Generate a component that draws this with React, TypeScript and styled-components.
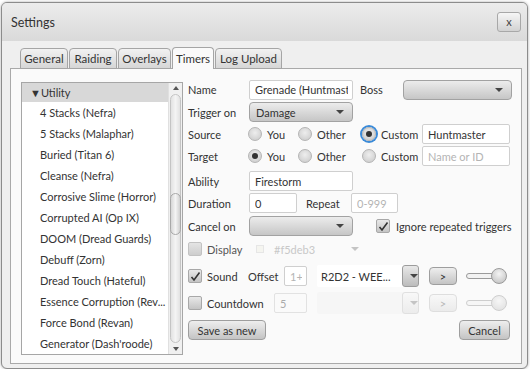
import styled, { createGlobalStyle } from 'styled-components';

const GlobalStyle = createGlobalStyle`
  body {
    margin: 0;
    background: #ffffff;
    font-family: Lato, 'Open Sans', sans-serif;
    font-size: 11px;
    color: #333;
  }
  * { box-sizing: border-box; }
`;

const Window = styled.div`
  width: 527px;
  height: 367px;
  margin: 2px 0 0 1px;
  border: 1px solid #8c8c8c;
  border-radius: 6px;
  box-shadow: 0 0 3px rgba(0, 0, 0, 0.35);
  overflow: hidden;
  display: flex;
  flex-direction: column;
  background: #efefef;
`;

const TitleBar = styled.div`
  height: 38px;
  flex: none;
  display: flex;
  align-items: center;
  justify-content: space-between;
  padding: 0 6px 0 9px;
  background: linear-gradient(#ececec, #d9d9d9);
  font-size: 12.5px;
  color: #333;
`;

const CloseButton = styled.div`
  width: 24px;
  height: 20px;
  border: 1px solid #a8a8a8;
  border-radius: 3px;
  background: linear-gradient(#f6f6f6, #d2d2d2);
  display: flex;
  align-items: center;
  justify-content: center;
  font-size: 11px;
  color: #444;
  padding-bottom: 2px;
`;

const Body = styled.div`
  flex: 1;
  display: flex;
  flex-direction: column;
  padding: 6px 5px 8px 8px;
`;

const TabStrip = styled.div`
  display: flex;
  align-items: flex-end;
  gap: 1px;
  padding-left: 10px;
  height: 22px;
  position: relative;
  z-index: 1;
  margin-bottom: -1px;
`;

const Tab = styled.div<{ $active?: boolean; $w: number }>`
  width: ${(p) => p.$w}px;
  height: ${(p) => (p.$active ? 22 : 21)}px;
  border: 1px solid #a5a5a5;
  border-bottom: ${(p) => (p.$active ? 'none' : '1px solid #a5a5a5')};
  border-radius: 4px 4px 0 0;
  background: ${(p) => (p.$active ? '#fafafa' : 'linear-gradient(#f2f2f2, #d6d6d6)')};
  display: flex;
  align-items: center;
  justify-content: center;
  font-size: 11.5px;
  color: #333;
`;

const Panel = styled.div`
  flex: 1;
  border: 1px solid #a9a9a9;
  background: #fafafa;
  display: flex;
  min-height: 0;
`;

const ListBox = styled.div`
  width: 162px;
  flex: none;
  margin: 13px 0 8px 10px;
  border: 1px solid #a6a6a6;
  background: #ffffff;
  display: flex;
  overflow: hidden;
`;

const ListItems = styled.div`
  flex: 1;
  min-width: 0;
  display: flex;
  flex-direction: column;
  overflow: hidden;
`;

const ListHeader = styled.div`
  height: 19px;
  flex: none;
  background: #d8d8d8;
  display: flex;
  align-items: center;
  padding-left: 8px;
  color: #333;
`;

const ListItem = styled.div`
  height: 21px;
  flex: none;
  display: flex;
  align-items: center;
  padding-left: 18px;
  white-space: nowrap;
  color: #333;
`;

const ScrollBar = styled.div`
  width: 14px;
  flex: none;
  background: #f0f0f0;
  border-left: 1px solid #e0e0e0;
  display: flex;
  flex-direction: column;
  align-items: center;
`;

const ScrollArrow = styled.div<{ $down?: boolean }>`
  height: 10px;
  flex: none;
  display: flex;
  align-items: center;
  justify-content: center;
  &::after {
    content: '';
    border-left: 3px solid transparent;
    border-right: 3px solid transparent;
    ${(p) => (p.$down ? 'border-top: 4px solid #555;' : 'border-bottom: 4px solid #555;')}
  }
`;

const ScrollTrack = styled.div`
  flex: 1;
  width: 11px;
  border: 1px solid #c4c4c4;
  border-radius: 6px;
  background: linear-gradient(90deg, #e2e2e2, #f4f4f4, #e2e2e2);
  margin: 1px 0;
  display: flex;
  flex-direction: column;
`;

const ScrollThumb = styled.div`
  height: 42px;
  margin: 0 -1px;
  border: 1px solid #a8a8a8;
  border-radius: 6px;
  background: linear-gradient(90deg, #d6d6d6, #f4f4f4, #d0d0d0);
`;

const Form = styled.div`
  flex: 1;
  display: flex;
  flex-direction: column;
  padding: 10px 10px 0 5px;
`;

const Row = styled.div<{ $h?: number; $mt?: number }>`
  display: flex;
  align-items: center;
  height: ${(p) => p.$h ?? 22}px;
  margin-top: ${(p) => p.$mt ?? 0}px;
  flex: none;
`;

const Label = styled.span<{ $w?: number; $ml?: number; $disabled?: boolean }>`
  width: ${(p) => (p.$w ? `${p.$w}px` : 'auto')};
  margin-left: ${(p) => p.$ml ?? 0}px;
  flex: none;
  white-space: nowrap;
  color: ${(p) => (p.$disabled ? '#555' : '#333')};
`;

const TextBox = styled.input<{ $w: number; $ml?: number }>`
  width: ${(p) => p.$w}px;
  height: 20px;
  margin-left: ${(p) => p.$ml ?? 0}px;
  flex: none;
  border: 1px solid #cfcfcf;
  border-radius: 2px;
  background: #ffffff;
  padding: 0 4px 0 5px;
  font-family: inherit;
  font-size: 11px;
  color: #333;
  outline: none;
  &::placeholder { color: #b4b4b4; }
  &:disabled { background: #fafafa; color: #aaa; border-color: #e2e2e2; }
`;

const Select = styled.div<{ $w: number; $ml?: number; $disabled?: boolean }>`
  width: ${(p) => p.$w}px;
  height: 20px;
  margin-left: ${(p) => p.$ml ?? 0}px;
  flex: none;
  border: 1px solid ${(p) => (p.$disabled ? 'transparent' : '#a2a2a2')};
  border-radius: 4px;
  background: ${(p) => (p.$disabled ? 'transparent' : 'linear-gradient(#ececec, #c6c6c6)')};
  display: flex;
  align-items: center;
  padding: 0 8px 0 6px;
  color: #333;
  gap: 6px;
`;

const Arrow = styled.span<{ $disabled?: boolean }>`
  margin-left: auto;
  flex: none;
  border-left: 4px solid transparent;
  border-right: 4px solid transparent;
  border-top: 4px solid ${(p) => (p.$disabled ? '#c4c4c4' : '#444')};
`;

const Swatch = styled.span`
  width: 8px;
  height: 8px;
  border: 1px solid #e6e6e6;
  background: #f5f5f0;
  flex: none;
`;

const SwatchText = styled.span`
  color: #c8c8c8;
  margin-left: 4px;
`;

const Combo = styled.div<{ $disabled?: boolean }>`
  width: 102px;
  height: 22px;
  margin-left: 10px;
  flex: none;
  display: flex;
  background: ${(p) => (p.$disabled ? '#f6f6f6' : '#ffffff')};
  border-radius: 2px;
`;

const ComboText = styled.div`
  flex: 1;
  display: flex;
  align-items: center;
  padding-left: 4px;
  color: #333;
  white-space: nowrap;
`;

const ComboButton = styled.div<{ $disabled?: boolean }>`
  width: 17px;
  flex: none;
  border: 1px solid ${(p) => (p.$disabled ? '#e0e0e0' : '#9c9c9c')};
  border-radius: 3px;
  background: ${(p) => (p.$disabled ? 'linear-gradient(#f8f8f8, #ececec)' : 'linear-gradient(#e8e8e8, #bcbcbc)')};
  display: flex;
  align-items: center;
  justify-content: center;
`;

const Button = styled.div<{ $w: number; $ml?: number; $disabled?: boolean; $h?: number }>`
  width: ${(p) => p.$w}px;
  height: ${(p) => p.$h ?? 20}px;
  margin-left: ${(p) => p.$ml ?? 0}px;
  flex: none;
  border: 1px solid ${(p) => (p.$disabled ? '#dedede' : '#9e9e9e')};
  border-radius: 4px;
  background: ${(p) => (p.$disabled ? 'linear-gradient(#f8f8f8, #ebebeb)' : 'linear-gradient(#eeeeee, #c4c4c4)')};
  display: flex;
  align-items: center;
  justify-content: center;
  color: ${(p) => (p.$disabled ? '#b8b8b8' : '#333')};
`;

const Spacer = styled.div`
  flex: 1;
`;

const RadioItem = styled.div<{ $w: number }>`
  width: ${(p) => p.$w}px;
  flex: none;
  display: flex;
  align-items: center;
  gap: 5px;
`;

const RadioDot = styled.span<{ $checked?: boolean; $focus?: boolean }>`
  width: 14px;
  height: 14px;
  flex: none;
  border-radius: 50%;
  border: 1px solid #b4b4b4;
  background: radial-gradient(circle at 50% 40%, #eeeeee, #c8c8c8);
  display: flex;
  align-items: center;
  justify-content: center;
  box-shadow: ${(p) => (p.$focus ? '0 0 0 2px #3a8ad8' : 'none')};
  &::after {
    content: '';
    display: ${(p) => (p.$checked ? 'block' : 'none')};
    width: 6px;
    height: 6px;
    border-radius: 50%;
    background: #333;
  }
`;

const CheckBox = styled.span<{ $disabled?: boolean }>`
  width: 14px;
  height: 14px;
  flex: none;
  border: 1px solid ${(p) => (p.$disabled ? '#c2c2c2' : '#a8a8a8')};
  border-radius: 2px;
  background: ${(p) => (p.$disabled ? 'linear-gradient(#e4e4e4, #cdcdcd)' : 'linear-gradient(#e8e8e8, #c4c4c4)')};
  display: flex;
  align-items: center;
  justify-content: center;
  margin-right: 5px;
`;

const Slider = styled.div<{ $disabled?: boolean }>`
  width: 41px;
  height: 16px;
  margin-left: 9px;
  flex: none;
  display: flex;
  align-items: center;
  opacity: ${(p) => (p.$disabled ? 0.45 : 1)};
`;

const SliderTrack = styled.div`
  flex: 1;
  height: 6px;
  border: 1px solid #9a9a9a;
  border-radius: 3px;
  background: #f2f2f2;
  margin-right: -4px;
`;

const SliderThumb = styled.div`
  width: 16px;
  height: 16px;
  flex: none;
  border-radius: 50%;
  border: 1px solid #9a9a9a;
  background: radial-gradient(circle at 50% 35%, #f4f4f4, #bdbdbd);
`;

const Check = () => (
  <svg width="11" height="11" viewBox="0 0 11 11">
    <path d="M1.5 6 L4 9 L9.5 1.5" fill="none" stroke="#333" strokeWidth="1.6" />
  </svg>
);

const timers = [
  '4 Stacks (Nefra)',
  '5 Stacks (Malaphar)',
  'Buried (Titan 6)',
  'Cleanse (Nefra)',
  'Corrosive Slime (Horror)',
  'Corrupted AI (Op IX)',
  'DOOM (Dread Guards)',
  'Debuff (Zorn)',
  'Dread Touch (Hateful)',
  'Essence Corruption (Rev...',
  'Force Bond (Revan)',
  "Generator (Dash'roode)",
];

const tabs = [
  { name: 'General', w: 48 },
  { name: 'Raiding', w: 48 },
  { name: 'Overlays', w: 53 },
  { name: 'Timers', w: 42, active: true },
  { name: 'Log Upload', w: 67 },
];

const RadioRow = ({ label, checked, text, placeholder, focus }: { label: string; checked: number; text?: string; placeholder?: string; focus?: boolean }) => (
  <Row $h={22}>
    <Label $w={60}>{label}</Label>
    <RadioItem $w={50}>
      <RadioDot $checked={checked === 0} />
      <Label>You</Label>
    </RadioItem>
    <RadioItem $w={64}>
      <RadioDot $checked={checked === 1} />
      <Label>Other</Label>
    </RadioItem>
    <RadioItem $w={60}>
      <RadioDot $checked={checked === 2} $focus={focus} />
      <Label>Custom</Label>
    </RadioItem>
    <TextBox $w={88} readOnly defaultValue={text} placeholder={placeholder} />
  </Row>
);

export default function App() {
  return (
    <>
      <GlobalStyle />
      <Window>
        <TitleBar>
          <span>Settings</span>
          <CloseButton>x</CloseButton>
        </TitleBar>
        <Body>
          <TabStrip>
            {tabs.map((t) => (
              <Tab key={t.name} $w={t.w} $active={t.active}>
                {t.name}
              </Tab>
            ))}
          </TabStrip>
          <Panel>
            <ListBox>
              <ListItems>
                <ListHeader>▼Utility</ListHeader>
                {timers.map((t) => (
                  <ListItem key={t}>{t}</ListItem>
                ))}
              </ListItems>
              <ScrollBar>
                <ScrollArrow />
                <ScrollTrack>
                  <ScrollThumb style={{ marginTop: 98 }} />
                </ScrollTrack>
                <ScrollArrow $down />
              </ScrollBar>
            </ListBox>
            <Form>
              <Row $h={21}>
                <Label $w={61}>Name</Label>
                <TextBox $w={104} readOnly defaultValue="Grenade (Huntmaster)" />
                <Label $w={43} $ml={7}>Boss</Label>
                <Select $w={109}>
                  <Arrow />
                </Select>
              </Row>
              <Row $mt={1}>
                <Label $w={61}>Trigger on</Label>
                <Select $w={104}>
                  Damage
                  <Arrow />
                </Select>
              </Row>
              <RadioRow label="Source" checked={2} text="Huntmaster" focus />
              <RadioRow label="Target" checked={0} placeholder="Name or ID" />
              <Row $mt={3}>
                <Label $w={61}>Ability</Label>
                <TextBox $w={104} readOnly defaultValue="Firestorm" />
              </Row>
              <Row>
                <Label $w={61}>Duration</Label>
                <TextBox $w={48} readOnly defaultValue="0" />
                <Label $w={45} $ml={9}>Repeat</Label>
                <TextBox $w={47} readOnly placeholder="0-999" />
              </Row>
              <Row $mt={1}>
                <Label $w={61}>Cancel on</Label>
                <Select $w={104}>
                  <Arrow />
                </Select>
                <CheckBox style={{ marginLeft: 23 }}>
                  <Check />
                </CheckBox>
                <Label $ml={1}>Ignore repeated triggers</Label>
              </Row>
              <Row $mt={1}>
                <CheckBox $disabled />
                <Label $w={42} $disabled>Display</Label>
                <Select $w={119} $disabled>
                  <Swatch />
                  <SwatchText>#f5deb3</SwatchText>
                  <Arrow $disabled />
                </Select>
              </Row>
              <Row $h={24} $mt={4}>
                <CheckBox>
                  <Check />
                </CheckBox>
                <Label $w={41}>Sound</Label>
                <Label $w={36}>Offset</Label>
                <TextBox $w={23} readOnly placeholder="1+" />
                <Combo>
                  <ComboText>R2D2 - WEE...</ComboText>
                  <ComboButton>
                    <Arrow />
                  </ComboButton>
                </Combo>
                <Button $w={28} $h={18} $ml={10}>&gt;</Button>
                <Slider>
                  <SliderTrack />
                  <SliderThumb />
                </Slider>
              </Row>
              <Row $h={24} $mt={3}>
                <CheckBox />
                <Label $w={67}>Countdown</Label>
                <TextBox $w={33} disabled defaultValue="5" />
                <Combo $disabled>
                  <ComboText />
                  <ComboButton $disabled>
                    <Arrow $disabled />
                  </ComboButton>
                </Combo>
                <Button $w={28} $h={18} $ml={10} $disabled>&gt;</Button>
                <Slider $disabled>
                  <SliderTrack />
                  <SliderThumb />
                </Slider>
              </Row>
              <Row $h={20} $mt={5}>
                <Button $w={78}>Save as new</Button>
                <Spacer />
                <Button $w={51} style={{ marginRight: 2 }}>Cancel</Button>
              </Row>
            </Form>
          </Panel>
        </Body>
      </Window>
    </>
  );
}
